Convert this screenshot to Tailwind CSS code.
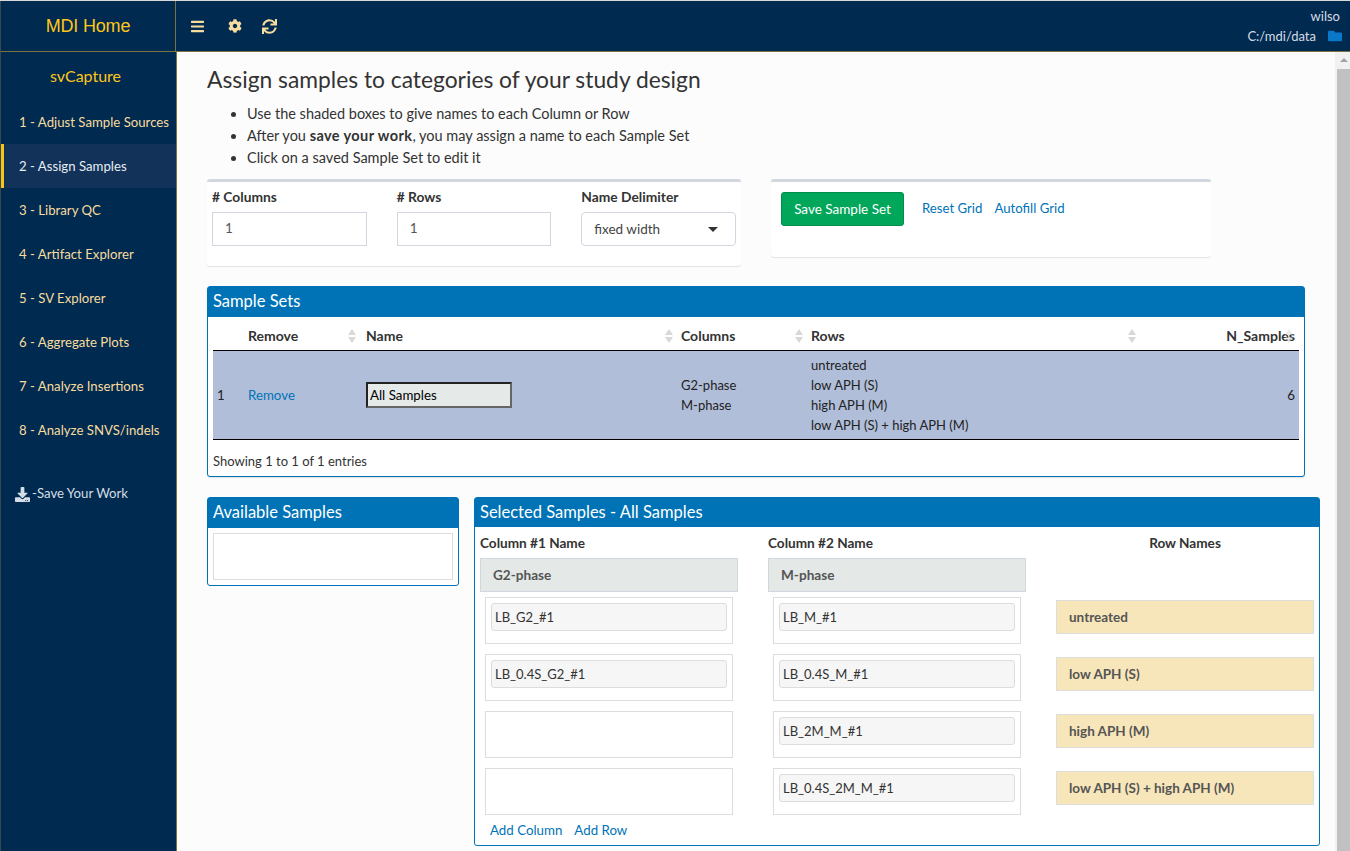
<!DOCTYPE html>
<html lang="en">
<head>
  <meta charset="UTF-8" />
  <title>svCapture</title>
  <script src="https://cdn.jsdelivr.net/npm/@tailwindcss/browser@4"></script>
</head>
<body class="m-0 overflow-hidden bg-[#fcfcfc] font-['Lato',sans-serif] text-[14px] text-[#333]">
<div class="flex flex-col w-[1350px] h-[851px] overflow-hidden">

  <!-- top bar -->
  <header class="flex h-[52px] shrink-0 bg-[#002a4f] border-t border-t-[#d8d8d8]">
    <div class="flex items-center justify-center w-[176px] border-l border-l-[#3a4650] border-r border-b border-r-[#77743f] border-b-[#77743f] font-['Liberation_Sans',sans-serif] text-[18px] tracking-[-0.2px] text-[#ffc61a]">MDI Home</div>
    <div class="flex flex-1 items-center justify-between border-b border-[#77743f]">
      <div class="flex items-center pl-[15px] text-[#f7dca0]">
        <svg class="w-[13px] h-[15px]" viewBox="0 0 448 512" fill="currentColor"><path d="M16 132h416c8.837 0 16-7.163 16-16V76c0-8.837-7.163-16-16-16H16C7.163 60 0 67.163 0 76v40c0 8.837 7.163 16 16 16zm0 160h416c8.837 0 16-7.163 16-16v-40c0-8.837-7.163-16-16-16H16c-8.837 0-16 7.163-16 16v40c0 8.837 7.163 16 16 16zm0 160h416c8.837 0 16-7.163 16-16v-40c0-8.837-7.163-16-16-16H16c-8.837 0-16 7.163-16 16v40c0 8.837 7.163 16 16 16z"/></svg>
        <svg class="w-[14px] h-[14px] ml-[24px]" viewBox="0 0 512 512" fill="currentColor"><path d="M487.4 315.7l-42.6-24.6c4.3-23.2 4.3-47 0-70.2l42.6-24.6c4.9-2.8 7.1-8.6 5.5-14-11.1-35.6-30-67.8-54.7-94.6-3.8-4.1-10-5.1-14.8-2.3L380.8 110c-17.9-15.4-38.5-27.3-60.8-35.1V25.8c0-5.6-3.9-10.5-9.4-11.7-36.7-8.2-74.3-7.8-109.2 0-5.5 1.2-9.4 6.1-9.4 11.7V75c-22.2 7.9-42.8 19.8-60.8 35.1L88.7 85.5c-4.9-2.8-11-1.9-14.8 2.3-24.7 26.7-43.6 58.9-54.7 94.6-1.7 5.4.6 11.2 5.5 14L67.3 221c-4.3 23.2-4.3 47 0 70.2l-42.6 24.6c-4.9 2.8-7.1 8.6-5.5 14 11.1 35.6 30 67.8 54.7 94.6 3.8 4.1 10 5.1 14.8 2.3l42.6-24.6c17.9 15.4 38.5 27.3 60.8 35.1v49.2c0 5.6 3.9 10.5 9.4 11.7 36.7 8.2 74.3 7.8 109.2 0 5.5-1.2 9.4-6.1 9.4-11.7v-49.2c22.2-7.9 42.8-19.8 60.8-35.1l42.6 24.6c4.9 2.8 11 1.9 14.8-2.3 24.7-26.7 43.6-58.9 54.7-94.6 1.5-5.5-.7-11.3-5.6-14.1zM256 336c-44.1 0-80-35.9-80-80s35.9-80 80-80 80 35.9 80 80-35.9 80-80 80z"/></svg>
        <svg class="w-[15px] h-[15px] ml-[20px]" viewBox="0 0 512 512" fill="currentColor"><path d="M440.65 12.57l4 82.77A247.16 247.16 0 0 0 255.83 8C134.73 8 33.91 94.92 12.29 209.82A12 12 0 0 0 24.09 224h49.05a12 12 0 0 0 11.67-9.26 175.91 175.91 0 0 1 317-56.94l-101.46-4.86a12 12 0 0 0-12.57 12v47.41a12 12 0 0 0 12 12H500a12 12 0 0 0 12-12V12a12 12 0 0 0-12-12h-47.37a12 12 0 0 0-11.98 12.57zM255.83 432a175.61 175.61 0 0 1-146-77.8l101.8 4.87a12 12 0 0 0 12.57-12v-47.4a12 12 0 0 0-12-12H12a12 12 0 0 0-12 12V500a12 12 0 0 0 12 12h47.35a12 12 0 0 0 12-12.6l-4.15-82.57A247.17 247.17 0 0 0 255.83 504c121.11 0 221.93-86.92 243.55-201.82a12 12 0 0 0-11.8-14.18h-49.05a12 12 0 0 0-11.67 9.26A175.86 175.86 0 0 1 255.83 432z"/></svg>
      </div>
      <div class="flex flex-col items-end pr-[8px] text-[13px] text-[#d5dde6] leading-[20px]">
        <div class="pr-[2px]">wilso</div>
        <div class="flex items-center">C:/mdi/data
          <svg class="w-[14px] h-[14px] ml-[12px]" viewBox="0 0 512 512" fill="#0a78c8"><path d="M464 128H272l-64-64H48C21.49 64 0 85.49 0 112v288c0 26.51 21.49 48 48 48h416c26.51 0 48-21.49 48-48V176c0-26.51-21.49-48-48-48z"/></svg>
        </div>
      </div>
    </div>
  </header>

  <div class="flex flex-1 min-h-0">
    <!-- sidebar -->
    <aside class="w-[177px] shrink-0 bg-[#002a4f] border-l border-l-[#3a4650] border-r border-r-[#77743f] text-[13.2px] text-[#f7dca0]">
      <div class="h-[48px] flex items-center justify-center pr-[6px] pb-[1px] text-[16px] text-[#ffc61a]">svCapture</div>
      <nav>
        <a class="flex items-center h-[44px] pt-[2px] pl-[18px] whitespace-nowrap">1 - Adjust Sample Sources</a>
        <a class="flex items-center h-[44px] pt-[2px] pl-[15px] bg-[#12325a] border-l-[3px] border-[#f5c518] text-[#e6edf3]">2 - Assign Samples</a>
        <a class="flex items-center h-[44px] pt-[2px] pl-[18px]">3 - Library QC</a>
        <a class="flex items-center h-[44px] pt-[2px] pl-[18px]">4 - Artifact Explorer</a>
        <a class="flex items-center h-[44px] pt-[2px] pl-[18px]">5 - SV Explorer</a>
        <a class="flex items-center h-[44px] pt-[2px] pl-[18px]">6 - Aggregate Plots</a>
        <a class="flex items-center h-[44px] pt-[2px] pl-[18px]">7 - Analyze Insertions</a>
        <a class="flex items-center h-[44px] pt-[2px] pl-[18px]">8 - Analyze SNVS/indels</a>
        <a class="flex items-center h-[44px] mt-[19px] pt-[2px] pl-[14px] text-[#d5dde6]">
          <svg class="w-[15px] h-[15px] mr-[2px]" viewBox="0 0 512 512" fill="currentColor"><path d="M216 0h80c13.3 0 24 10.7 24 24v168h87.7c17.8 0 26.7 21.5 14.1 34.1L269.7 378.3c-7.5 7.5-19.8 7.5-27.3 0L90.1 226.1c-12.6-12.6-3.7-34.1 14.1-34.1H192V24c0-13.3 10.7-24 24-24zm296 376v112c0 13.3-10.7 24-24 24H24c-13.3 0-24-10.7-24-24V376c0-13.3 10.7-24 24-24h146.7l49 49c20.1 20.1 52.5 20.1 72.6 0l49-49H488c13.3 0 24 10.7 24 24zm-124 88c0-11-9-20-20-20s-20 9-20 20 9 20 20 20 20-9 20-20zm64 0c0-11-9-20-20-20s-20 9-20 20 9 20 20 20 20-9 20-20z"/></svg>-Save Your Work
        </a>
      </nav>
    </aside>

    <!-- content -->
    <main class="flex-1 min-w-0 pl-[30px] overflow-hidden">
      <h1 class="mt-[12px] h-[30px] leading-[30px] text-[22.8px] font-normal">Assign samples to categories of your study design</h1>
      <ul class="mt-[9px] pl-[40px] list-disc leading-[22px] text-[14.5px]">
        <li>Use the shaded boxes to give names to each Column or Row</li>
        <li>After you <b class="tracking-[0.4px]">save your work</b>, you may assign a name to each Sample Set</li>
        <li>Click on a saved Sample Set to edit it</li>
      </ul>

      <div class="mt-[10px] flex items-start gap-[30px]">
        <div class="w-[534px] h-[87px] bg-white border-t-[3px] border-[#d2d6de] rounded-[3px] shadow-[0_1px_1px_rgba(0,0,0,0.1)] px-[5px] pt-[5px] grid grid-cols-3 gap-x-[30px]">
          <div>
            <div class="font-bold h-[25px] leading-[20px] text-[13.8px]">#&nbsp;Columns</div>
            <div class="h-[34px] leading-[30px] border border-[#d2d6de] pl-[12px] bg-white text-[13.5px] text-[#555]">1</div>
          </div>
          <div>
            <div class="font-bold h-[25px] leading-[20px] text-[13.8px]">#&nbsp;Rows</div>
            <div class="h-[34px] leading-[30px] border border-[#d2d6de] pl-[12px] bg-white text-[13.5px] text-[#555]">1</div>
          </div>
          <div>
            <div class="font-bold h-[25px] leading-[20px] text-[13.8px]">Name Delimiter</div>
            <div class="h-[34px] leading-[30px] border border-[#d2d6de] rounded-[4px] pl-[12px] pr-[17px] flex items-center justify-between bg-white text-[13.5px] text-[#444]">fixed width
              <span class="w-0 h-0 border-x-[5px] border-x-transparent border-t-[5px] border-t-[#333]"></span>
            </div>
          </div>
        </div>
        <div class="w-[440px] h-[78px] bg-white border-t-[3px] border-[#d2d6de] rounded-[3px] shadow-[0_1px_1px_rgba(0,0,0,0.1)] pl-[10px] pt-[10px] flex items-start text-[13.2px]">
          <button class="h-[34px] w-[123px] bg-[#00a65a] border border-[#008d4c] rounded-[3px] text-white text-[13.5px]">Save Sample Set</button>
          <a class="ml-[18px] mt-[7px] text-[#0073b7]">Reset Grid</a>
          <a class="ml-[12px] mt-[7px] text-[#0073b7]">Autofill Grid</a>
        </div>
      </div>

      <!-- sample sets table -->
      <section class="mt-[20px] w-[1098px] h-[191px] bg-white border border-[#0073b7] rounded-[3px] shadow-[0_1px_1px_rgba(0,0,0,0.1)]">
        <div class="h-[30px] bg-[#0073b7] text-white text-[16.5px] leading-[28px] pl-[5px]">Sample Sets</div>
        <div class="px-[5px]">
          <table class="w-[1086px] table-fixed border-collapse">
            <colgroup><col class="w-[31px]"/><col class="w-[118px]"/><col class="w-[315px]"/><col class="w-[130px]"/><col class="w-[334px]"/><col class="w-[158px]"/></colgroup>
            <thead>
              <tr class="h-[33px] border-b border-black text-left">
                <th></th>
                <th class="relative pl-[4px] pt-[4px] font-bold">Remove
                  <span class="absolute right-[6px] top-[12px] flex flex-col gap-[2px]"><i class="w-0 h-0 border-x-[4px] border-x-transparent border-b-[6px] border-b-[#d8d8d8]"></i><i class="w-0 h-0 border-x-[4px] border-x-transparent border-t-[6px] border-t-[#d8d8d8]"></i></span></th>
                <th class="relative pl-[4px] pt-[4px] font-bold">Name
                  <span class="absolute right-[4px] top-[12px] flex flex-col gap-[2px]"><i class="w-0 h-0 border-x-[4px] border-x-transparent border-b-[6px] border-b-[#d8d8d8]"></i><i class="w-0 h-0 border-x-[4px] border-x-transparent border-t-[6px] border-t-[#d8d8d8]"></i></span></th>
                <th class="relative pl-[4px] pt-[4px] font-bold">Columns
                  <span class="absolute right-[4px] top-[12px] flex flex-col gap-[2px]"><i class="w-0 h-0 border-x-[4px] border-x-transparent border-b-[6px] border-b-[#d8d8d8]"></i><i class="w-0 h-0 border-x-[4px] border-x-transparent border-t-[6px] border-t-[#d8d8d8]"></i></span></th>
                <th class="relative pl-[4px] pt-[4px] font-bold">Rows
                  <span class="absolute right-[5px] top-[12px] flex flex-col gap-[2px]"><i class="w-0 h-0 border-x-[4px] border-x-transparent border-b-[6px] border-b-[#d8d8d8]"></i><i class="w-0 h-0 border-x-[4px] border-x-transparent border-t-[6px] border-t-[#d8d8d8]"></i></span></th>
                <th class="relative pr-[4px] pt-[4px] font-bold text-right">N_Samples
                  <span class="absolute right-[6px] top-[12px] flex flex-col gap-[2px] opacity-50"><i class="w-0 h-0 border-x-[4px] border-x-transparent border-b-[6px] border-b-[#d8d8d8]"></i><i class="w-0 h-0 border-x-[4px] border-x-transparent border-t-[6px] border-t-[#d8d8d8]"></i></span></th>
              </tr>
            </thead>
            <tbody>
              <tr class="h-[89px] bg-[#b0bed9] border-b border-black text-[#222] leading-[20px] text-[13.3px]">
                <td class="pl-[4px]">1</td>
                <td class="pl-[4px] text-[#0073b7]">Remove</td>
                <td class="pl-[4px]"><div class="w-[146px] h-[26px] border-2 border-t-[#222] border-l-[#222] border-r-[#666] border-b-[#666] bg-[#e5e9e8] pl-[2px] leading-[22px] text-black">All Samples</div></td>
                <td class="pl-[4px] text-[13px]">G2-phase<br/>M-phase</td>
                <td class="pl-[4px] text-[13px]">untreated<br/>low APH (S)<br/>high APH (M)<br/>low APH (S) + high APH (M)</td>
                <td class="pr-[4px] text-right">6</td>
              </tr>
            </tbody>
          </table>
          <div class="mt-[11px] leading-[20px] text-[13px]">Showing 1 to 1 of 1 entries</div>
        </div>
      </section>

      <div class="mt-[20px] flex items-start gap-[15px]">
        <section class="w-[252px] h-[89px] bg-white border border-[#0073b7] rounded-[3px]">
          <div class="h-[30px] bg-[#0073b7] text-white text-[16.5px] leading-[28px] pl-[5px]">Available Samples</div>
          <div class="mx-[5px] mt-[5px] h-[47px] border border-[#ddd]"></div>
        </section>

        <section class="w-[846px] h-[349px] bg-white border border-[#0073b7] rounded-[3px]">
          <div class="h-[29px] bg-[#0073b7] text-white text-[16.5px] leading-[29px] pl-[5px]">Selected Samples - All Samples</div>
          <div class="pl-[5px] grid grid-cols-[258px_258px_258px] gap-x-[30px] font-bold text-[13.6px]">
            <div class="h-[31px] leading-[33px]">Column #1 Name</div>
            <div class="h-[31px] leading-[33px]">Column #2 Name</div>
            <div class="h-[31px] leading-[33px] text-center">Row Names</div>

            <div class="h-[34px] leading-[32px] pl-[12px] bg-[#e4e8e7] border border-[#d2d6de] text-[#555]">G2-phase</div>
            <div class="h-[34px] leading-[32px] pl-[12px] bg-[#e4e8e7] border border-[#d2d6de] text-[#555]">M-phase</div>
            <div></div>
          </div>
          <div class="pl-[5px] mt-[5px] grid grid-cols-[258px_258px_258px] gap-x-[30px] gap-y-[10px] auto-rows-[47px] items-start text-[13px]">
            <div class="mx-[5px] h-[47px] border border-[#ddd] p-[5px]"><div class="h-[28px] leading-[26px] pl-[3px] bg-[#f6f6f6] border border-[#ddd] rounded-[3px]">LB_G2_#1</div></div>
            <div class="mx-[5px] h-[47px] border border-[#ddd] p-[5px]"><div class="h-[28px] leading-[26px] pl-[3px] bg-[#f6f6f6] border border-[#ddd] rounded-[3px]">LB_M_#1</div></div>
            <div class="mt-[3px] h-[34px] leading-[32px] pl-[12px] bg-[#f7e6b9] border border-[#ddd] font-bold text-[13.5px] text-[#555]">untreated</div>

            <div class="mx-[5px] h-[47px] border border-[#ddd] p-[5px]"><div class="h-[28px] leading-[26px] pl-[3px] bg-[#f6f6f6] border border-[#ddd] rounded-[3px]">LB_0.4S_G2_#1</div></div>
            <div class="mx-[5px] h-[47px] border border-[#ddd] p-[5px]"><div class="h-[28px] leading-[26px] pl-[3px] bg-[#f6f6f6] border border-[#ddd] rounded-[3px]">LB_0.4S_M_#1</div></div>
            <div class="mt-[3px] h-[34px] leading-[32px] pl-[12px] bg-[#f7e6b9] border border-[#ddd] font-bold text-[13.5px] text-[#555]">low APH (S)</div>

            <div class="mx-[5px] h-[47px] border border-[#ddd]"></div>
            <div class="mx-[5px] h-[47px] border border-[#ddd] p-[5px]"><div class="h-[28px] leading-[26px] pl-[3px] bg-[#f6f6f6] border border-[#ddd] rounded-[3px]">LB_2M_M_#1</div></div>
            <div class="mt-[3px] h-[34px] leading-[32px] pl-[12px] bg-[#f7e6b9] border border-[#ddd] font-bold text-[13.5px] text-[#555]">high APH (M)</div>

            <div class="mx-[5px] h-[47px] border border-[#ddd]"></div>
            <div class="mx-[5px] h-[47px] border border-[#ddd] p-[5px]"><div class="h-[28px] leading-[26px] pl-[3px] bg-[#f6f6f6] border border-[#ddd] rounded-[3px]">LB_0.4S_2M_M_#1</div></div>
            <div class="mt-[3px] h-[34px] leading-[32px] pl-[12px] bg-[#f7e6b9] border border-[#ddd] font-bold text-[13.5px] text-[#555]">low APH (S) + high APH (M)</div>
          </div>
          <div class="pl-[15px] mt-[5px] leading-[20px] text-[13.3px] text-[#0073b7]"><a>Add Column</a><a class="ml-[12px]">Add Row</a></div>
        </section>
      </div>
    </main>

    <!-- page scrollbar -->
    <div class="w-[15px] shrink-0 bg-[#f1f1f1] flex flex-col items-center pl-[2px]">
      <span class="mt-[6px] w-0 h-0 border-x-[4px] border-x-transparent border-b-[4px] border-b-[#a3a3a3]"></span>
      <div class="mt-[7px] w-[13px] flex-1 bg-[#c1c1c1]"></div>
    </div>
  </div>
</div>
</body>
</html>
